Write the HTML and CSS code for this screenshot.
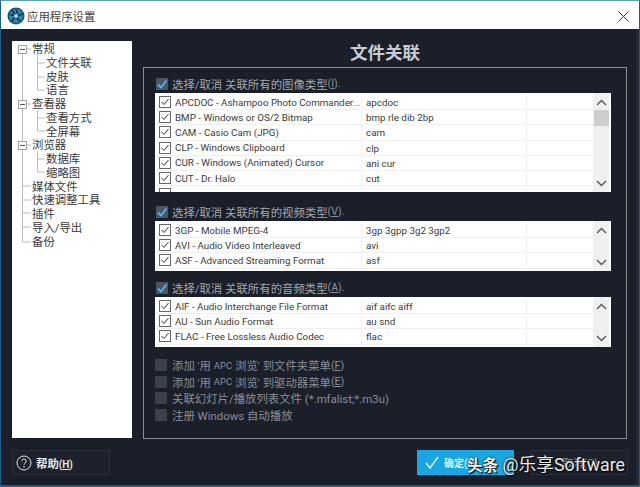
FILE: index.html
```html
<!DOCTYPE html>
<html lang="zh">
<head>
<meta charset="utf-8">
<title>应用程序设置</title>
<link rel="stylesheet" href="styles.css">
</head>
<body>
<div class="window">
  <header class="titlebar">
    <svg class="app-icon" width="18" height="18" viewBox="0 0 18 18">
      <circle cx="9" cy="9" r="8.5" fill="#16506f"/>
      <circle cx="9" cy="9" r="7" fill="#2f87ad"/>
      <path d="M9 2.5 L11 7 M15.3 7 L10.8 9 M13 14.2 L9.8 10.8 M5 14.2 L7.5 10.5 M2.7 7.5 L7.2 8.5 M5 3.6 L8 7.6" stroke="#0f2f45" stroke-width="1.6" fill="none"/>
      <circle cx="9" cy="9" r="2" fill="#9fd3e6"/>
    </svg>
    <span class="title-text">应用程序设置</span>
    <svg class="close-icon" width="11" height="11" viewBox="0 0 11 11"><path d="M.5.5l10 10M10.5.5l-10 10" stroke="#333" stroke-width="1" fill="none"/></svg>
  </header>

  <main class="body">
    <nav class="tree">
      <svg class="tree-lines" width="60" height="210" viewBox="0 0 60 210">
        <g stroke="#bcbcbc" fill="none" stroke-width="1">
          <path d="M10.5 12V201M10.5 8H19M25.5 14V49M25.5 22H33M25.5 36H33M25.5 49H33M10.5 63H19M25.5 69V90M25.5 77H33M25.5 90H33M10.5 104H19M25.5 110V131M25.5 118H33M25.5 131H33M10.5 145H19M10.5 159H19M10.5 172H19M10.5 186H19M10.5 201H19"/>
        </g>
        <g fill="#fff" stroke="#a0a0a0">
          <rect x="6.5" y="4.5" width="8" height="8"/>
          <rect x="6.5" y="59.5" width="8" height="8"/>
          <rect x="6.5" y="100.5" width="8" height="8"/>
        </g>
        <path d="M8 8.5h5M8 63.5h5M8 104.5h5" stroke="#555"/>
      </svg>
      <div class="node">常规</div>
      <div class="node sub">文件关联</div>
      <div class="node sub">皮肤</div>
      <div class="node sub">语言</div>
      <div class="node">查看器</div>
      <div class="node sub">查看方式</div>
      <div class="node sub">全屏幕</div>
      <div class="node">浏览器</div>
      <div class="node sub">数据库</div>
      <div class="node sub">缩略图</div>
      <div class="node">媒体文件</div>
      <div class="node">快速调整工具</div>
      <div class="node">插件</div>
      <div class="node">导入/导出</div>
      <div class="node">备份</div>
    </nav>

    <section class="content">
      <h1 class="heading">文件关联</h1>
      <div class="group">
        <label class="master"><span class="tick"><svg width="12" height="12" viewBox="0 0 12 12"><path d="M2 6.5l3 3 5.5-7" stroke="#4fb4e6" stroke-width="2" fill="none"/></svg></span>选择/取消 关联所有的图像类型<span class="key">(<u>I</u>).</span></label>
        <div class="list list-tall">
          <div class="rows">
            <div class="row"><span class="cell first"><span class="cb"><svg width="10" height="10" viewBox="0 0 10 10"><path d="M1.5 5l2.5 2.5 4.5-5.5" stroke="#333" fill="none"/></svg></span>APCDOC - Ashampoo Photo Commander...</span><span class="cell">apcdoc</span><span class="cell"></span></div>
            <div class="row"><span class="cell first"><span class="cb"><svg width="10" height="10" viewBox="0 0 10 10"><path d="M1.5 5l2.5 2.5 4.5-5.5" stroke="#333" fill="none"/></svg></span>BMP - Windows or OS/2 Bitmap</span><span class="cell">bmp rle dib 2bp</span><span class="cell"></span></div>
            <div class="row"><span class="cell first"><span class="cb"><svg width="10" height="10" viewBox="0 0 10 10"><path d="M1.5 5l2.5 2.5 4.5-5.5" stroke="#333" fill="none"/></svg></span>CAM - Casio Cam (JPG)</span><span class="cell">cam</span><span class="cell"></span></div>
            <div class="row"><span class="cell first"><span class="cb"><svg width="10" height="10" viewBox="0 0 10 10"><path d="M1.5 5l2.5 2.5 4.5-5.5" stroke="#333" fill="none"/></svg></span>CLP - Windows Clipboard</span><span class="cell">clp</span><span class="cell"></span></div>
            <div class="row"><span class="cell first"><span class="cb"><svg width="10" height="10" viewBox="0 0 10 10"><path d="M1.5 5l2.5 2.5 4.5-5.5" stroke="#333" fill="none"/></svg></span>CUR - Windows (Animated) Cursor</span><span class="cell">ani cur</span><span class="cell"></span></div>
            <div class="row"><span class="cell first"><span class="cb"><svg width="10" height="10" viewBox="0 0 10 10"><path d="M1.5 5l2.5 2.5 4.5-5.5" stroke="#333" fill="none"/></svg></span>CUT - Dr. Halo</span><span class="cell">cut</span><span class="cell"></span></div>
            <div class="row row-clipped"><span class="cell first"><span class="cb"></span></span><span class="cell"></span><span class="cell"></span></div>
          </div>
          <div class="scroll">
            <svg class="arrow" width="15" height="17" viewBox="0 0 15 17"><path d="M3 12l4.5-4.5L12 12" stroke="#555" stroke-width="1.4" fill="none"/></svg>
            <div class="thumb"></div>
            <div class="track"></div>
            <svg class="arrow" width="15" height="17" viewBox="0 0 15 17"><path d="M3 6l4.5 4.5L12 6" stroke="#555" stroke-width="1.4" fill="none"/></svg>
          </div>
        </div>

        <label class="master master-video"><span class="tick"><svg width="12" height="12" viewBox="0 0 12 12"><path d="M2 6.5l3 3 5.5-7" stroke="#4fb4e6" stroke-width="2" fill="none"/></svg></span>选择/取消 关联所有的视频类型<span class="key">(<u>V</u>).</span></label>
        <div class="list list-short">
          <div class="rows">
            <div class="row"><span class="cell first"><span class="cb"><svg width="10" height="10" viewBox="0 0 10 10"><path d="M1.5 5l2.5 2.5 4.5-5.5" stroke="#333" fill="none"/></svg></span>3GP - Mobile MPEG-4</span><span class="cell">3gp 3gpp 3g2 3gp2</span><span class="cell"></span></div>
            <div class="row"><span class="cell first"><span class="cb"><svg width="10" height="10" viewBox="0 0 10 10"><path d="M1.5 5l2.5 2.5 4.5-5.5" stroke="#333" fill="none"/></svg></span>AVI - Audio Video Interleaved</span><span class="cell">avi</span><span class="cell"></span></div>
            <div class="row"><span class="cell first"><span class="cb"><svg width="10" height="10" viewBox="0 0 10 10"><path d="M1.5 5l2.5 2.5 4.5-5.5" stroke="#333" fill="none"/></svg></span>ASF - Advanced Streaming Format</span><span class="cell">asf</span><span class="cell"></span></div>
          </div>
          <div class="scroll">
            <svg class="arrow" width="15" height="17" viewBox="0 0 15 17"><path d="M3 12l4.5-4.5L12 12" stroke="#555" stroke-width="1.4" fill="none"/></svg>
            <div class="track"></div>
            <svg class="arrow" width="15" height="17" viewBox="0 0 15 17"><path d="M3 6l4.5 4.5L12 6" stroke="#555" stroke-width="1.4" fill="none"/></svg>
          </div>
        </div>

        <label class="master master-audio"><span class="tick"><svg width="12" height="12" viewBox="0 0 12 12"><path d="M2 6.5l3 3 5.5-7" stroke="#4fb4e6" stroke-width="2" fill="none"/></svg></span>选择/取消 关联所有的音频类型<span class="key">(<u>A</u>).</span></label>
        <div class="list list-short">
          <div class="rows">
            <div class="row"><span class="cell first"><span class="cb"><svg width="10" height="10" viewBox="0 0 10 10"><path d="M1.5 5l2.5 2.5 4.5-5.5" stroke="#333" fill="none"/></svg></span>AIF - Audio Interchange File Format</span><span class="cell">aif aifc aiff</span><span class="cell"></span></div>
            <div class="row"><span class="cell first"><span class="cb"><svg width="10" height="10" viewBox="0 0 10 10"><path d="M1.5 5l2.5 2.5 4.5-5.5" stroke="#333" fill="none"/></svg></span>AU - Sun Audio Format</span><span class="cell">au snd</span><span class="cell"></span></div>
            <div class="row"><span class="cell first"><span class="cb"><svg width="10" height="10" viewBox="0 0 10 10"><path d="M1.5 5l2.5 2.5 4.5-5.5" stroke="#333" fill="none"/></svg></span>FLAC - Free Lossless Audio Codec</span><span class="cell">flac</span><span class="cell"></span></div>
          </div>
          <div class="scroll">
            <svg class="arrow" width="15" height="17" viewBox="0 0 15 17"><path d="M3 12l4.5-4.5L12 12" stroke="#555" stroke-width="1.4" fill="none"/></svg>
            <div class="track"></div>
            <svg class="arrow" width="15" height="17" viewBox="0 0 15 17"><path d="M3 6l4.5 4.5L12 6" stroke="#555" stroke-width="1.4" fill="none"/></svg>
          </div>
        </div>

        <div class="options">
          <label class="option"><span class="box"></span>添加 '用 <span class="small">APC</span> 浏览' 到文件夹菜单<span class="key">(<u>F</u>)</span></label>
          <label class="option"><span class="box"></span>添加 '用 <span class="small">APC</span> 浏览' 到驱动器菜单<span class="key">(<u>E</u>)</span></label>
          <label class="option"><span class="box"></span>关联幻灯片/播放列表文件 (*.mfalist;*.m3u)</label>
          <label class="option"><span class="box"></span>注册 Windows 自动播放</label>
        </div>
      </div>
    </section>

    <footer class="footer">
      <button class="btn help">
        <svg width="16" height="16" viewBox="0 0 16 16"><circle cx="8" cy="8" r="7" stroke="#e8e8e8" fill="none"/><path d="M5.8 6.2a2.2 2.2 0 1 1 3.4 1.8c-.8.5-1.2.9-1.2 1.8" stroke="#e8e8e8" fill="none"/><circle cx="8" cy="12" r=".8" fill="#e8e8e8"/></svg>
        <span>帮助<span class="hk">(<u>H</u>)</span></span>
      </button>
      <div class="footer-right">
        <button class="btn ok">
          <svg width="14" height="13" viewBox="0 0 14 13"><path d="M1 7l4 5L13 1" stroke="#e6f6ff" stroke-width="1.3" fill="none"/></svg>
          <span class="ok-text">确定(O)</span>
        </button>
        <button class="btn cancel"><span>取消(C)</span></button>
      </div>
    </footer>
    <div class="watermark"><b>头条</b> @乐享Software</div>
  </main>
</div>
</body>
</html>
```

FILE: styles.css
```css
* { box-sizing: border-box; }
html, body { margin: 0; padding: 0; }
body {
  width: 640px;
  height: 487px;
  overflow: hidden;
  font-family: Roboto, "Noto Sans CJK SC", sans-serif;
}
.window {
  width: 640px;
  height: 487px;
  display: flex;
  flex-direction: column;
  border-top: 1px solid #5d9fb3;
  border-left: 1px solid #1d5d88;
  border-right: 1px solid #1d5d88;
  border-bottom: 2px solid #1d5d88;
  background: #1a1f2a;
}
.titlebar {
  height: 28px;
  flex: none;
  background: #fff;
  display: flex;
  align-items: center;
  padding: 2px 10px 0 6px;
}
.app-icon { flex: none; }
.title-text {
  margin-left: 2px;
  font-size: 11.4px;
  color: #444;
  flex: 1;
}
.body {
  position: relative;
  flex: 1;
  display: grid;
  grid-template-columns: 120px 484px;
  grid-template-rows: 398px 1fr;
  column-gap: 11px;
  padding: 12px 0 0 11px;
  border-right: 3px solid #232a36;
}
.tree {
  position: relative;
  background: #fff;
  height: 397px;
  padding-top: 2px;
}
.tree-lines { position: absolute; left: 0; top: 0; }
.node {
  position: relative;
  height: 13.77px;
  line-height: 13.77px;
  font-size: 11.4px;
  color: #3a3a3a;
  padding-left: 20px;
  white-space: nowrap;
}
.node.sub { padding-left: 34px; }
.content { min-width: 0; }
.heading {
  margin: 0;
  height: 26px;
  line-height: 24px;
  text-align: center;
  font-size: 17.5px;
  font-weight: 700;
  color: #c9cdd2;
}
.group {
  height: 372px;
  border: 1px solid #8b9097;
  padding: 7px 0 0 11px;
}
.master {
  display: flex;
  align-items: center;
  height: 17px;
  margin-bottom: 1px;
  font-size: 11.4px;
  color: #a3a8ae;
  white-space: pre;
}
.master-video { margin-top: 11px; }
.master-audio { margin-top: 8px; }
.tick {
  width: 12px;
  height: 12px;
  margin: 0 4px 0 1px;
  background: #4d5560;
  display: block;
  flex: none;
}
.tick svg { display: block; }
.key { font-size: 10.5px; color: #8d939a; }
.list {
  width: 456px;
  background: #fff;
  display: flex;
  overflow: hidden;
}
.list-tall { height: 99px; }
.list-short { height: 50px; }
.rows {
  width: 439px;
  flex: none;
  padding-top: 2px;
  overflow: hidden;
}
.row {
  display: grid;
  grid-template-columns: 207px 165px 67px;
  height: 15.2px;
  border-bottom: 1px solid #f0f0f0;
  font-size: 9.8px;
  line-height: 15px;
  color: #3c3c3c;
}
.cell {
  border-right: 1px solid #f0f0f0;
  padding-left: 4px;
  white-space: nowrap;
  overflow: hidden;
}
.cell.first {
  display: flex;
  align-items: center;
  padding-left: 4px;
}
.row-clipped { border-bottom: 0; }
.cb {
  width: 12px;
  height: 12px;
  border: 1px solid #666;
  margin-right: 4px;
  flex: none;
  display: block;
  background: #fff;
}
.cb svg { display: block; }
.scroll {
  width: 15px;
  flex: none;
  background: #f0f0f0;
  display: flex;
  flex-direction: column;
}
.arrow { display: block; flex: none; }
.thumb { height: 16px; flex: none; background: #cdcdcd; }
.track { flex: 1; }
.options { margin-top: 10px; }
.option {
  display: flex;
  align-items: center;
  height: 16.6px;
  font-size: 11.4px;
  color: #8a8f96;
  white-space: pre;
}
.box {
  width: 12px;
  height: 12px;
  background: #3b404a;
  margin: 0 5px 0 0;
  flex: none;
}
.small { font-size: 9.5px; }
.footer {
  grid-column: 1 / 3;
  display: flex;
  justify-content: space-between;
  padding: 11px 0 0 0;
  margin-right: -1px;
  align-items: flex-start;
}
.footer-right { display: flex; gap: 16px; }
.btn {
  display: flex;
  align-items: center;
  height: 25px;
  width: 98px;
  margin: 0;
  padding: 0;
  border: 1px solid #2a303b;
  background: #1c212c;
  font-family: inherit;
  color: #e8e8e8;
  font-size: 11.4px;
}
.help { padding-left: 3px; gap: 4px; font-weight: 700; }
.hk { font-size: 10px; }
.ok {
  background: #1aa6e2;
  border-color: #1aa6e2;
  padding-left: 7px;
  gap: 5px;
  width: 97px;
  font-weight: 700;
  font-size: 10px;
  color: #def3fd;
}
.ok-text { white-space: nowrap; }
.cancel { justify-content: center; padding-left: 2px; font-size: 10.5px; color: #9a9fa6; }
.watermark {
  position: absolute;
  left: 466px;
  top: 425px;
  font-size: 17.8px;
  line-height: 22px;
  color: #ececec;
  white-space: nowrap;
  text-shadow: 0 0 2px #000, 1px 1px 1px #000;
}
.watermark b { font-weight: 700; font-size: 15.5px; color: #f4f4f4; }
```
